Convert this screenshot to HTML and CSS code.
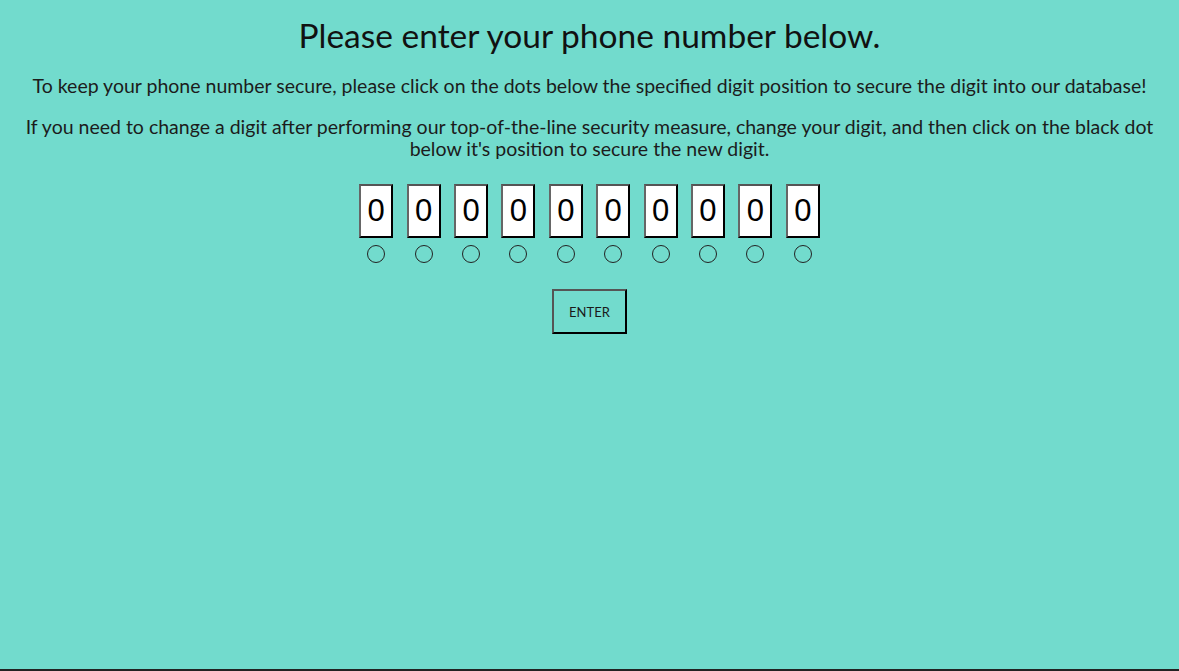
FILE: index.html
```html
<!DOCTYPE html>
<html lang="en">
<head>
<meta charset="utf-8">
<title>Phone number</title>
<link rel="stylesheet" href="styles.css">
</head>
<body>
<main class="page">
  <h1 class="title">Please enter your phone number below.</h1>
  <p class="note">To keep your phone number secure, please click on the dots below the specified digit position to secure the digit into our database!</p>
  <p class="note">If you need to change a digit after performing our top-of-the-line security measure, change your digit, and then click on the black dot below it's position to secure the new digit.</p>
  <div class="digits">
    <div class="slot"><input class="digit" value="0" readonly><span class="dot"></span></div>
    <div class="slot"><input class="digit" value="0" readonly><span class="dot"></span></div>
    <div class="slot"><input class="digit" value="0" readonly><span class="dot"></span></div>
    <div class="slot"><input class="digit" value="0" readonly><span class="dot"></span></div>
    <div class="slot"><input class="digit" value="0" readonly><span class="dot"></span></div>
    <div class="slot"><input class="digit" value="0" readonly><span class="dot"></span></div>
    <div class="slot"><input class="digit" value="0" readonly><span class="dot"></span></div>
    <div class="slot"><input class="digit" value="0" readonly><span class="dot"></span></div>
    <div class="slot"><input class="digit" value="0" readonly><span class="dot"></span></div>
    <div class="slot"><input class="digit" value="0" readonly><span class="dot"></span></div>
  </div>
  <button class="enter" type="button">ENTER</button>
</main>
</body>
</html>
```
FILE: styles.css
```css
* { box-sizing: border-box; }
html, body { margin: 0; padding: 0; }
body {
  background: #72dbcd;
  color: #111;
  font-family: "Lato", "Liberation Sans", sans-serif;
}
.page {
  min-height: 100vh;
  border-bottom: 2px solid #222;
  display: flex;
  flex-direction: column;
  align-items: center;
  padding: 16px 20px 0;
  text-align: center;
}
.title {
  margin: 0;
  font-size: 33.5px;
  font-weight: 400;
  line-height: 38px;
  color: #111;
}
.note {
  margin: 21px 0 0;
  font-size: 19.5px;
  font-weight: 400;
  line-height: 22px;
  color: #1c1c1c;
}
.note + .note { margin-top: 19px; }
.digits {
  margin-top: 24px;
  display: grid;
  grid-template-columns: repeat(10, 34px);
  column-gap: 13.4px;
}
.slot {
  display: flex;
  flex-direction: column;
  align-items: center;
  gap: 7px;
}
.digit {
  width: 34px;
  height: 54px;
  padding: 0;
  background: #fff;
  border: 2px solid;
  border-color: #555 #000 #000 #666;
  font-family: "Liberation Sans", Arial, sans-serif;
  font-size: 31px;
  text-align: center;
  color: #000;
  outline: none;
}
.dot {
  width: 18px;
  height: 18px;
  border: 1.3px solid #222;
  border-radius: 50%;
}
.enter {
  margin-top: 26px;
  width: 75px;
  height: 45px;
  background: transparent;
  border: 2px solid;
  border-color: #555 #000 #000 #555;
  font-family: "Lato", "Liberation Sans", sans-serif;
  font-size: 13px;
  font-weight: 400;
  color: #1a1a1a;
  padding: 0;
}
```
